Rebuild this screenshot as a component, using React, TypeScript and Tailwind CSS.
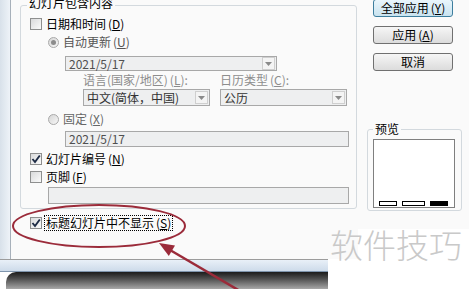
import React from "react";

const Check = ({ checked }: { checked?: boolean }) => (
  <span className="flex h-[12px] w-[12px] shrink-0 items-center justify-center border border-[#8e8f8f] bg-gradient-to-br from-[#d9dadb] to-[#fbfbfb]">
    {checked && (
      <svg width="10" height="10" viewBox="0 0 10 10">
        <path d="M1.5 5 L4 8 L8.8 1.5" fill="none" stroke="#1d2b45" strokeWidth="1.9" />
      </svg>
    )}
  </span>
);

const Radio = ({ on }: { on?: boolean }) => (
  <span className="flex h-[11px] w-[11px] shrink-0 items-center justify-center rounded-full border border-[#a9a9a9] bg-gradient-to-br from-[#d6d6d6] to-[#f7f7f7]">
    {on && <span className="h-[5px] w-[5px] rounded-full bg-[#8c8c8c]"></span>}
  </span>
);

const Key = ({ k }: { k: string }) => (
  <span className="ml-[2px]">
    (<span className="underline underline-offset-1">{k}</span>)
  </span>
);

const Field = ({ text, className }: { text: string; className: string }) => (
  <div className={`flex items-center border border-[#a8a8a8] bg-[#eeeff0] pl-[3px] text-[12px] leading-none text-[#505050] ${className}`}>
    {text}
  </div>
);

const Arrow = () => (
  <span className="ml-auto mr-[1px] flex h-[13px] w-[13px] items-center justify-center border border-[#cfcfcf] bg-[#f4f4f4]">
    <svg width="7" height="4" viewBox="0 0 7 4">
      <path d="M0 0 H7 L3.5 4 Z" fill="#8a8a8a" />
    </svg>
  </span>
);

const Select = ({ text, className }: { text: string; className: string }) => (
  <div className={`flex items-center border border-[#a8a8a8] bg-[#eeeff0] pl-[3px] text-[12px] leading-none text-[#333] ${className}`}>
    <span>{text}</span>
    <Arrow />
  </div>
);

const Btn = ({ children, primary }: { children: React.ReactNode; primary?: boolean }) => (
  <div
    className={`flex h-[18px] w-[80px] items-center justify-center rounded-[3px] border text-[12px] leading-none text-black ${
      primary
        ? "border-[#3d7e9e] bg-gradient-to-b from-[#eaf6fc] to-[#c9e3ef]"
        : "border-[#707070] bg-gradient-to-b from-[#f6f6f6] to-[#dcdcdc]"
    }`}
  >
    {children}
  </div>
);

export default function App() {
  return (
    <div className="relative flex h-[289px] w-[469px] flex-col overflow-hidden bg-white font-['Noto_Sans_CJK_SC',sans-serif]">
      <div className="flex h-[259px]">
        {/* window frame */}
        <div className="w-[11px] border-r border-[#a7b0ba] bg-gradient-to-r from-[#d8e1ea] to-[#eef3f8]"></div>

        {/* main column */}
        <div className="flex w-[347px] flex-col bg-[#fafafa]">
          <div className="ml-[9px] mt-[5px] flex h-[204px] w-[337px] flex-col rounded-[3px] border border-[#d3d9de] pb-[3px]">
            <div className="-mt-[10px] ml-[6px] h-[14px] w-fit bg-[#fafafa] px-[2px] text-[12px] leading-[14px] text-black">
              幻灯片包含内容
            </div>

            <div className="ml-[9px] mt-[7px] flex h-[14px] items-center gap-[4px] text-[12px] leading-none text-black">
              <Check />
              <span>
                日期和时间<Key k="D" />
              </span>
            </div>

            <div className="ml-[27px] mt-[4px] flex h-[14px] items-center gap-[4px] text-[12px] leading-none text-[#555]">
              <Radio on />
              <span>
                自动更新<Key k="U" />
              </span>
            </div>

            <div className="ml-[44px] mt-[7px] flex h-[15px] w-[212px] items-center border border-[#a8a8a8] bg-[#eeeff0] pl-[3px] text-[12px] leading-none text-[#505050]">
              <span>2021/5/17</span>
              <Arrow />
            </div>

            <div className="ml-[62px] mt-[2px] flex h-[14px] items-center text-[12px] leading-none text-[#8d8d8d]">
              <span className="w-[137px]">
                语言(国家/地区)<Key k="L" />:
              </span>
              <span>
                日历类型<Key k="C" />:
              </span>
            </div>

            <div className="ml-[62px] mt-[2px] flex gap-[10px]">
              <Select text="中文(简体，中国)" className="h-[17px] w-[127px]" />
              <Select text="公历" className="h-[17px] w-[127px]" />
            </div>

            <div className="ml-[27px] mt-[6px] flex h-[14px] items-center gap-[4px] text-[12px] leading-none text-[#666]">
              <Radio />
              <span>
                固定<Key k="X" />
              </span>
            </div>

            <Field text="2021/5/17" className="ml-[44px] mt-[5px] h-[16px] w-[284px]" />

            <div className="ml-[9px] mt-[5px] flex h-[14px] items-center gap-[4px] text-[12px] leading-none text-black">
              <Check checked />
              <span>
                幻灯片编号<Key k="N" />
              </span>
            </div>

            <div className="ml-[9px] mt-[4px] flex h-[14px] items-center gap-[4px] text-[12px] leading-none text-black">
              <Check />
              <span>
                页脚<Key k="F" />
              </span>
            </div>

            <Field text="" className="ml-[27px] mt-[3px] h-[17px] w-[301px]" />
          </div>

          <div className="ml-[19px] mt-[7px] flex h-[14px] items-center gap-[2px] text-[12px] leading-none text-black">
            <Check checked />
            <span className="border border-dotted border-black px-[1px] py-[1px]">
              标题幻灯片中不显示<Key k="S" />
            </span>
          </div>
        </div>

        {/* right column */}
        <div className="flex w-[111px] flex-col bg-[#fafafa]">
          <div className="ml-[15px] -mt-[1px] flex flex-col gap-[9px]">
            <Btn primary>
              全部应用<Key k="Y" />
            </Btn>
            <Btn>
              应用<Key k="A" />
            </Btn>
            <Btn>取消</Btn>
          </div>

          <div className="ml-[9px] mt-[58px] flex w-[95px] flex-col rounded-[3px] border border-[#d3d9de] pb-[2px]">
            <div className="-mt-[8px] ml-[5px] h-[14px] w-fit bg-[#fafafa] px-[2px] text-[12px] leading-[14px] text-black">
              预览
            </div>
            <div className="ml-[5px] mt-[3px] flex h-[69px] w-[82px] flex-col justify-end border border-[#7f7f7f] bg-white pb-[1px]">
              <div className="flex items-end gap-[5px] pl-[5px]">
                <span className="h-[5px] w-[18px] border border-black bg-white"></span>
                <span className="h-[5px] w-[23px] border border-black bg-white"></span>
                <span className="h-[5px] w-[18px] bg-black"></span>
              </div>
            </div>
          </div>

          <div className="mt-auto h-[30px] bg-white"></div>
        </div>
      </div>

      {/* bottom frame */}
      <div className="h-[13px] w-[328px] border-t border-b border-t-[#9c9c9c] border-b-[#7f95ad] bg-gradient-to-b from-[#e9f0f8] to-[#cddbea]"></div>
      <div className="ml-[6px] h-[17px] w-[322px] rounded-tl-[10px] bg-gradient-to-b from-[#1c1c1c] to-[#a8a8a8]"></div>

      {/* watermark */}
      <div className="absolute left-[330px] top-[228px] text-[33px] font-light leading-none text-[#c9c9c9]">
        软件技巧
      </div>

      {/* annotation */}
      <svg className="pointer-events-none absolute left-0 top-0" width="469" height="289" viewBox="0 0 469 289">
        <ellipse cx="99" cy="226" rx="86" ry="21" fill="none" stroke="#9b2b3a" strokeWidth="2" />
        <line x1="170" y1="250" x2="240" y2="291" stroke="#9b2b3a" strokeWidth="2.5" />
        <polygon points="159,243 168.8,255.9 175,245.6" fill="#9b2b3a" />
      </svg>
    </div>
  );
}
